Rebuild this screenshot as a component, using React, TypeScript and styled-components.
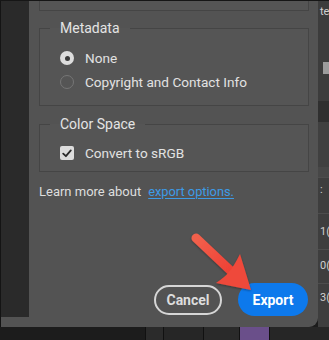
import React from "react";
import styled, { createGlobalStyle } from "styled-components";

const Global = createGlobalStyle`
  html, body { margin: 0; padding: 0; background: #1c1c1c; }
  #root { width: 329px; height: 340px; }
`;

const FONT = `"Roboto", "Liberation Sans", "Noto Sans", sans-serif`;

const Page = styled.div`
  position: relative;
  width: 329px;
  height: 340px;
  overflow: hidden;
  display: grid;
  grid-template-rows: 327px 13px;
  background: #1c1c1c;
  font-family: ${FONT};
`;

const TopRow = styled.div`
  display: flex;
  border-top: 1px solid #161616;
`;

const Dialog = styled.div`
  width: 317px;
  flex: none;
  display: grid;
  grid-template-columns: 28px 1fr;
  background: #535353;
  border-left: 1px solid #141414;
  border-bottom-right-radius: 9px;
`;

const Sidebar = styled.div`
  align-self: start;
  height: 316px;
  background: #2a2a2a;
`;

const Content = styled.div`
  display: flex;
  flex-direction: column;
  padding: 0 9px 11px 10px;
  color: #e2e2e2;
  font-size: 13.6px;
`;

const PrevGroupStub = styled.div`
  height: 9px;
  border: 1px solid #454545;
  border-top: none;
  background: #555555;
`;

const Group = styled.fieldset<{ $mt: number; $pt: number; $pb: number }>`
  margin: ${(p) => p.$mt}px 0 0 0;
  padding: ${(p) => p.$pt}px 10px ${(p) => p.$pb}px 10px;
  border: 1px solid #454545;
  background: #555555;
  min-width: 0;
`;

const Legend = styled.legend`
  padding: 0 10px;
  line-height: 18px;
  font-size: 14px;
  color: #e4e4e4;
`;

const OptionRow = styled.div`
  display: flex;
  align-items: center;
  gap: 11px;
  height: 24px;
  padding-left: 10px;
  font-size: 13.6px;
  color: #e2e2e2;
`;

const Radio = styled.span<{ $on?: boolean }>`
  box-sizing: border-box;
  width: 14px;
  height: 14px;
  border-radius: 50%;
  flex: none;
  display: grid;
  place-items: center;
  background: ${(p) => (p.$on ? "#dddddd" : "transparent")};
  border: ${(p) => (p.$on ? "none" : "1.5px solid #767676")};
  &::after {
    content: "";
    width: 5px;
    height: 5px;
    border-radius: 50%;
    background: ${(p) => (p.$on ? "#3a3a3a" : "transparent")};
  }
`;

const Check = styled.span`
  width: 14px;
  height: 14px;
  border-radius: 2px;
  background: #dddddd;
  flex: none;
  display: grid;
  place-items: center;
`;

const LearnLine = styled.div`
  margin-top: 11px;
  line-height: 18px;
  font-size: 13px;
  color: #dedede;
  display: flex;
  gap: 7px;
`;

const Link = styled.a`
  color: #3d9be6;
  font-size: 12.8px;
  text-decoration: underline;
  text-underline-offset: 2px;
`;

const ButtonRow = styled.div`
  margin-top: auto;
  display: flex;
  justify-content: flex-end;
  align-items: center;
  gap: 16px;
  padding-right: 1px;
`;

const PillButton = styled.button<{ $primary?: boolean }>`
  box-sizing: border-box;
  font-family: ${FONT};
  font-weight: 700;
  font-size: 14px;
  height: ${(p) => (p.$primary ? "33px" : "30px")};
  width: ${(p) => (p.$primary ? "70px" : "68px")};
  border-radius: 17px;
  padding: 0;
  color: ${(p) => (p.$primary ? "#ffffff" : "#dddddd")};
  background: ${(p) => (p.$primary ? "#0d79ec" : "transparent")};
  border: ${(p) => (p.$primary ? "none" : "2px solid #d6d6d6")};
`;

const RightStrip = styled.div`
  flex: 1;
  display: flex;
  flex-direction: column;
  background: #3e3e3e;
  overflow: hidden;
  font-size: 11px;
  color: #d0d0d0;
`;

const StripSeg = styled.div<{ $h: number; $bg: string; $line?: boolean }>`
  height: ${(p) => p.$h}px;
  flex: none;
  background: ${(p) => p.$bg};
  border-bottom: ${(p) => (p.$line ? "1px solid #4d4d4d" : "none")};
  display: flex;
  flex-direction: column;
  padding-left: 2px;
  box-sizing: border-box;
`;

const StripText = styled.span<{ $mt: number }>`
  margin-top: ${(p) => p.$mt}px;
  line-height: 12px;
  white-space: nowrap;
`;

const StripBlock = styled.span`
  margin: 44px 0 0 3px;
  width: 8px;
  height: 12px;
  background: #9c9c9c;
`;

const BottomBar = styled.div`
  display: grid;
  grid-template-columns: 145px 18px 40px 36px 30px 1fr;
  background: #1c1c1c;
`;

const BottomCell = styled.div<{ $bg: string }>`
  background: ${(p) => p.$bg};
  border-left: 1px solid #111;
`;

const ArrowSvg = styled.svg`
  position: absolute;
  left: 0;
  top: 0;
  pointer-events: none;
`;

export default function App() {
  return (
    <>
      <Global />
      <Page>
        <TopRow>
          <Dialog>
            <Sidebar />
            <Content>
              <PrevGroupStub />
              <Group $mt={8} $pt={9} $pb={11}>
                <Legend>Metadata</Legend>
                <OptionRow>
                  <Radio $on />
                  None
                </OptionRow>
                <OptionRow>
                  <Radio />
                  Copyright and Contact Info
                </OptionRow>
              </Group>
              <Group $mt={9} $pt={8} $pb={6}>
                <Legend>Color Space</Legend>
                <OptionRow>
                  <Check>
                    <svg width="10" height="9" viewBox="0 0 10 9">
                      <path d="M1.2 4.6 L3.9 7.2 L8.8 1.4" fill="none" stroke="#2b2b2b" strokeWidth="1.8" strokeLinecap="round" strokeLinejoin="round" />
                    </svg>
                  </Check>
                  Convert to sRGB
                </OptionRow>
              </Group>
              <LearnLine>
                <span>Learn more about</span>
                <Link>export options.</Link>
              </LearnLine>
              <ButtonRow>
                <PillButton>Cancel</PillButton>
                <PillButton $primary>Export</PillButton>
              </ButtonRow>
            </Content>
          </Dialog>
          <RightStrip>
            <StripSeg $h={100} $bg="#3c3c3c">
              <StripText $mt={5}>te</StripText>
              <StripBlock />
            </StripSeg>
            <StripSeg $h={21} $bg="#2f2f2f" />
            <StripSeg $h={45} $bg="#404040" />
            <StripSeg $h={11} $bg="#474747" $line />
            <StripSeg $h={36} $bg="#3e3e3e" $line>
              <StripText $mt={6}>:</StripText>
            </StripSeg>
            <StripSeg $h={36} $bg="#3e3e3e" $line>
              <StripText $mt={12}>1(</StripText>
            </StripSeg>
            <StripSeg $h={34} $bg="#3e3e3e" $line>
              <StripText $mt={10}>0(</StripText>
            </StripSeg>
            <StripSeg $h={40} $bg="#3e3e3e">
              <StripText $mt={8}>3(</StripText>
            </StripSeg>
          </RightStrip>
        </TopRow>
        <BottomBar>
          <div />
          <BottomCell $bg="#2b2b2b" />
          <BottomCell $bg="#262626" />
          <BottomCell $bg="#2a2a2a" />
          <BottomCell $bg="#6a4f8a" />
          <BottomCell $bg="#262626" />
        </BottomBar>
        <ArrowSvg width="329" height="340" viewBox="0 0 329 340">
          <defs>
            <filter id="sh" x="-20%" y="-20%" width="140%" height="140%">
              <feDropShadow dx="0" dy="1" stdDeviation="1.2" floodColor="#000" floodOpacity="0.35" />
            </filter>
            <linearGradient id="rg" x1="0" y1="0" x2="1" y2="1">
              <stop offset="0" stopColor="#f2604c" />
              <stop offset="1" stopColor="#ee3f34" />
            </linearGradient>
          </defs>
          <g filter="url(#sh)">
            <line x1="196" y1="238" x2="232" y2="272" stroke="url(#rg)" strokeWidth="9" strokeLinecap="round" />
            <path d="M251 290 L216 283 Q225 277 229 272 Q234 266 240 254 Z" fill="#ef4a3a" />
          </g>
        </ArrowSvg>
      </Page>
    </>
  );
}
